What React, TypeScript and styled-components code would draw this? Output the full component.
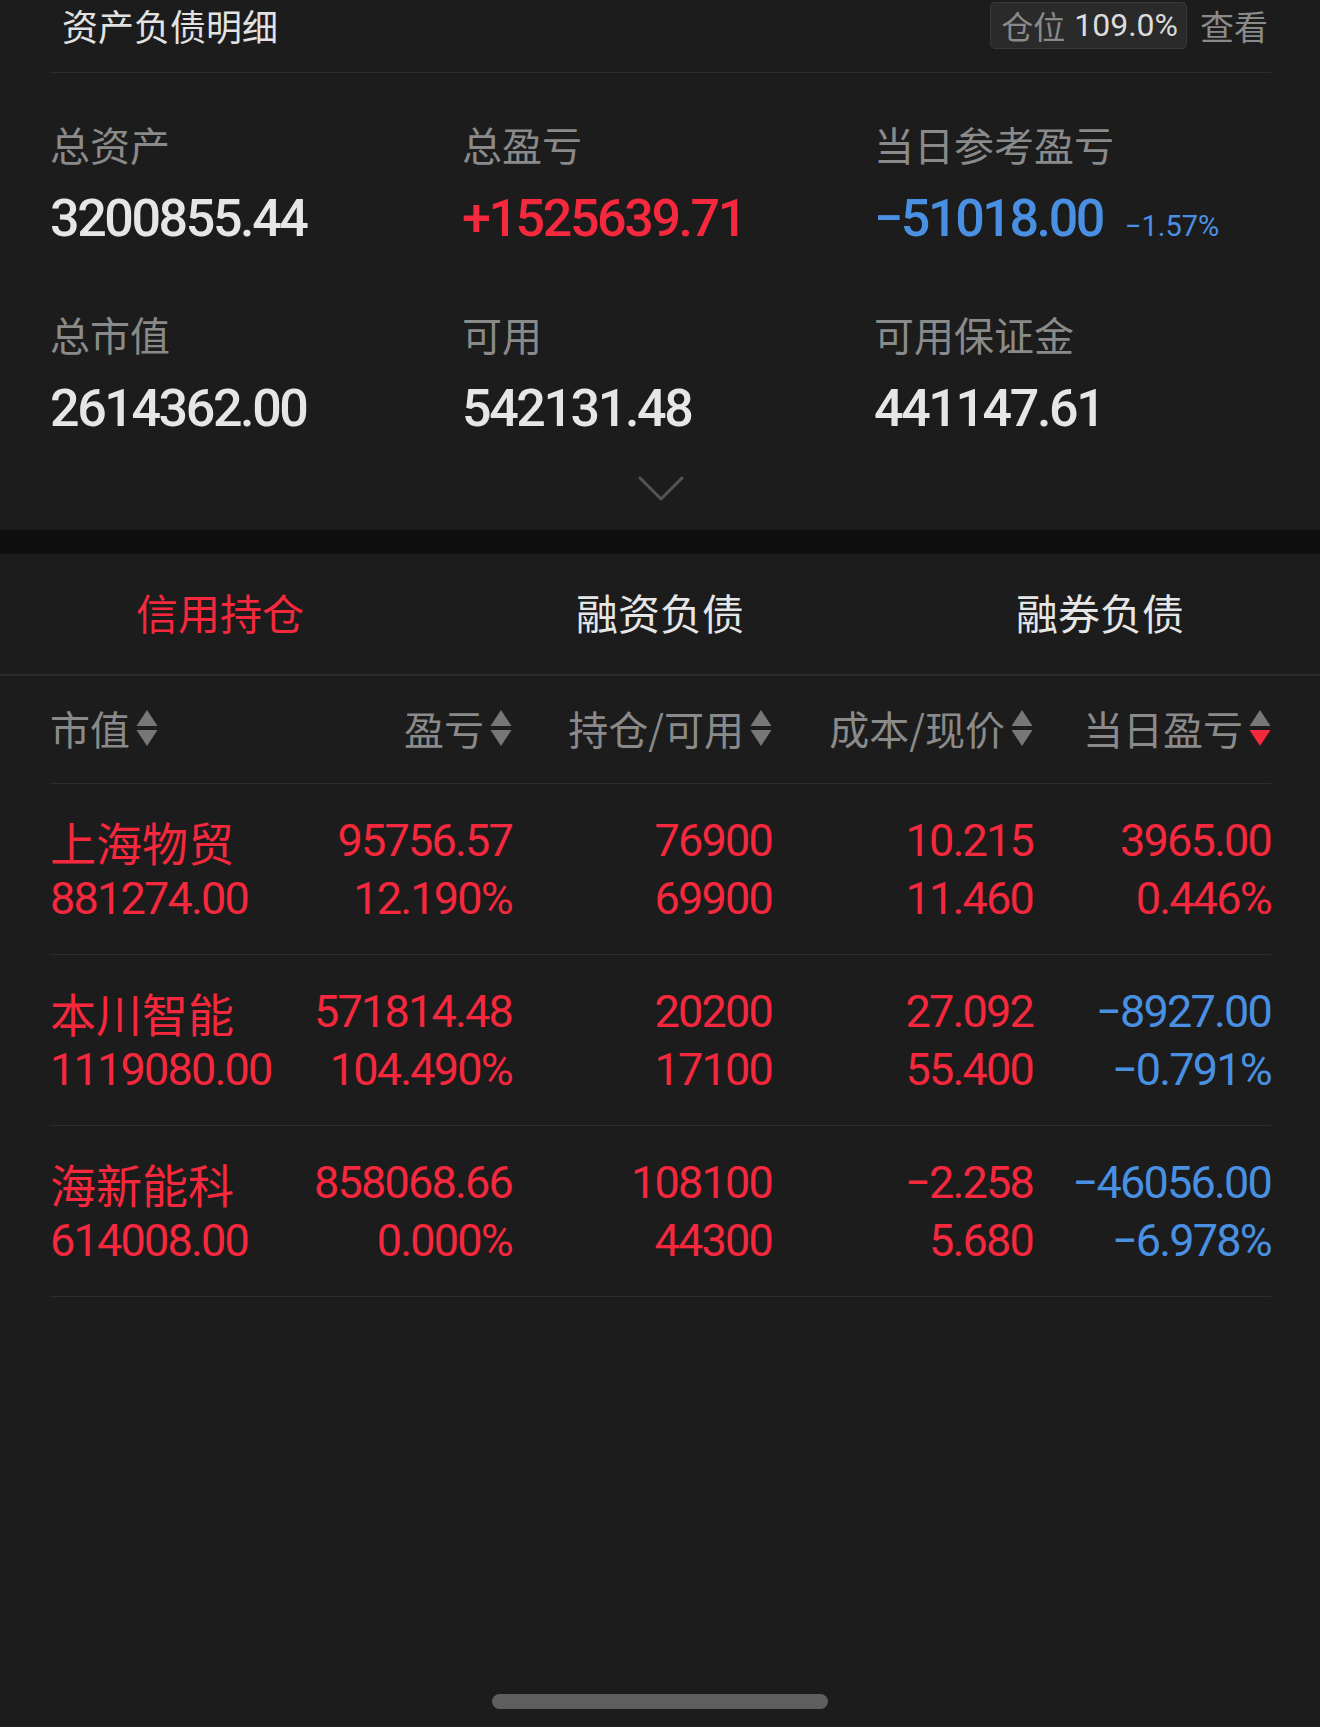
import React from "react";
import styled, { createGlobalStyle } from "styled-components";

const RED = "#f5283d";
const BLUE = "#4a90e2";
const GRAY = "#8a8a8a";
const WHITE = "#e6e6e6";
const LINE = "#2c2c2c";
const CJK = `"Noto Sans CJK SC", "Noto Sans", sans-serif`;
const NUM = `Roboto, "Noto Sans CJK SC", sans-serif`;

const GlobalStyle = createGlobalStyle`
  html, body {
    margin: 0;
    padding: 0;
    background: #1c1c1c;
  }
  body {
    font-family: ${NUM};
    -webkit-font-smoothing: antialiased;
  }
  * { box-sizing: border-box; }
`;

const Page = styled.div`
  min-height: 100vh;
  display: flex;
  flex-direction: column;
  background: #1c1c1c;
`;

const Summary = styled.section`
  padding: 0 49px 0 50px;
`;

const TopBar = styled.div`
  display: flex;
  align-items: center;
  justify-content: space-between;
  height: 73px;
  padding-bottom: 22px;
  border-bottom: 1px solid ${LINE};
`;

const Title = styled.div`
  margin-left: 12px;
  font-family: ${CJK};
  font-size: 36px;
  line-height: 50px;
  color: #e2e2e2;
`;

const TopActions = styled.div`
  display: flex;
  align-items: center;
  gap: 13px;
`;

const Badge = styled.div`
  display: flex;
  align-items: center;
  gap: 9px;
  height: 47px;
  padding: 0 8px 0 10px;
  background: #2a2a2a;
  border: 1px solid #383838;
  border-radius: 5px;
  font-size: 32px;
`;

const BadgeLabel = styled.span`
  font-family: ${CJK};
  color: ${GRAY};
`;

const BadgeValue = styled.span`
  color: #dcdcdc;
`;

const LinkText = styled.span`
  margin-right: 3px;
  font-family: ${CJK};
  font-size: 34px;
  color: ${GRAY};
`;

const StatsGrid = styled.div`
  display: grid;
  grid-template-columns: 412px 412px 1fr;
  row-gap: 60px;
  padding-top: 47px;
`;

const Stat = styled.div`
  display: flex;
  flex-direction: column;
`;

const StatLabel = styled.div`
  height: 48px;
  font-family: ${CJK};
  font-size: 40px;
  line-height: 48px;
  color: ${GRAY};
`;

const StatValue = styled.div<{ $color: string }>`
  height: 62px;
  margin-top: 20px;
  font-size: 52px;
  line-height: 62px;
  font-weight: 500;
  letter-spacing: -2.4px;
  white-space: nowrap;
  color: ${(p) => p.$color};
`;

const StatSub = styled.span`
  margin-left: 22px;
  font-size: 29px;
  font-weight: 400;
  letter-spacing: 0;
`;

const Expand = styled.div`
  display: flex;
  justify-content: center;
  margin-top: 36px;
  padding-bottom: 28px;
`;

const Band = styled.div`
  height: 24px;
  background: #0f0f0f;
`;

const Tabs = styled.nav`
  display: grid;
  grid-template-columns: repeat(3, 1fr);
  height: 122px;
  border-bottom: 2px solid ${LINE};
`;

const Tab = styled.div<{ $active?: boolean }>`
  display: flex;
  align-items: center;
  justify-content: center;
  padding-bottom: 4px;
  font-family: ${CJK};
  font-size: 42px;
  line-height: 50px;
  color: ${(p) => (p.$active ? RED : WHITE)};
`;

const Table = styled.section`
  padding: 0 49px 0 50px;
`;

const Row = styled.div`
  display: grid;
  grid-template-columns: 1fr 180px 260px 261px 238px;
  border-bottom: 1px solid ${LINE};
`;

const HeaderRow = styled(Row)`
  height: 108px;
  padding-bottom: 4px;
  align-items: center;
`;

const DataRow = styled(Row)`
  padding: 28px 0 26px;
`;

const HeadCell = styled.div<{ $align: "left" | "right" }>`
  display: flex;
  align-items: center;
  justify-content: ${(p) => (p.$align === "left" ? "flex-start" : "flex-end")};
  gap: 6px;
  font-family: ${CJK};
  font-size: 40px;
  line-height: 48px;
  color: ${GRAY};
  white-space: nowrap;
`;

const Cell = styled.div<{ $align: "left" | "right" }>`
  display: flex;
  flex-direction: column;
  align-items: ${(p) => (p.$align === "left" ? "flex-start" : "flex-end")};
  white-space: nowrap;
`;

const Line = styled.div<{ $color: string; $cjk?: boolean }>`
  height: 58px;
  font-family: ${(p) => (p.$cjk ? CJK : NUM)};
  font-size: ${(p) => (p.$cjk ? "46px" : "45px")};
  line-height: 58px;
  letter-spacing: ${(p) => (p.$cjk ? "0" : "-1.8px")};
  color: ${(p) => p.$color};
`;

const Spacer = styled.div`
  flex: 1;
`;

const HomeBar = styled.div`
  align-self: center;
  width: 336px;
  height: 15px;
  margin-bottom: 18px;
  border-radius: 8px;
  background: #5e5e5e;
`;

const SortIcon = ({ active }: { active?: "down" | "up" }) => (
  <svg width="22" height="36" viewBox="0 0 22 36">
    <polygon points="11,0 21.5,16 0.5,16" fill={active === "up" ? RED : "#777"} />
    <polygon points="0.5,20 21.5,20 11,36" fill={active === "down" ? RED : "#777"} />
  </svg>
);

const Chevron = () => (
  <svg width="46" height="26" viewBox="0 0 46 26">
    <polyline
      points="2,2 23,23 44,2"
      fill="none"
      stroke="#555"
      strokeWidth="3"
      strokeLinecap="round"
      strokeLinejoin="miter"
    />
  </svg>
);

type Sign = "up" | "down";
const tone = (s: Sign) => (s === "up" ? RED : BLUE);

const holdings: {
  name: string;
  mv: string;
  pl: string;
  plPct: string;
  qty: string;
  avail: string;
  cost: string;
  price: string;
  day: string;
  dayPct: string;
  daySign: Sign;
}[] = [
  {
    name: "上海物贸",
    mv: "881274.00",
    pl: "95756.57",
    plPct: "12.190%",
    qty: "76900",
    avail: "69900",
    cost: "10.215",
    price: "11.460",
    day: "3965.00",
    dayPct: "0.446%",
    daySign: "up",
  },
  {
    name: "本川智能",
    mv: "1119080.00",
    pl: "571814.48",
    plPct: "104.490%",
    qty: "20200",
    avail: "17100",
    cost: "27.092",
    price: "55.400",
    day: "−8927.00",
    dayPct: "−0.791%",
    daySign: "down",
  },
  {
    name: "海新能科",
    mv: "614008.00",
    pl: "858068.66",
    plPct: "0.000%",
    qty: "108100",
    avail: "44300",
    cost: "−2.258",
    price: "5.680",
    day: "−46056.00",
    dayPct: "−6.978%",
    daySign: "down",
  },
];

const stats = [
  { label: "总资产", value: "3200855.44", color: WHITE },
  { label: "总盈亏", value: "+1525639.71", color: RED },
  { label: "当日参考盈亏", value: "−51018.00", color: BLUE, sub: "−1.57%" },
  { label: "总市值", value: "2614362.00", color: WHITE },
  { label: "可用", value: "542131.48", color: WHITE },
  { label: "可用保证金", value: "441147.61", color: WHITE },
];

const headers: { label: string; align: "left" | "right"; active?: "down" }[] = [
  { label: "市值", align: "left" },
  { label: "盈亏", align: "right" },
  { label: "持仓/可用", align: "right" },
  { label: "成本/现价", align: "right" },
  { label: "当日盈亏", align: "right", active: "down" },
];

export default function App() {
  return (
    <Page>
      <GlobalStyle />
      <Summary>
        <TopBar>
          <Title>资产负债明细</Title>
          <TopActions>
            <Badge>
              <BadgeLabel>仓位</BadgeLabel>
              <BadgeValue>109.0%</BadgeValue>
            </Badge>
            <LinkText>查看</LinkText>
          </TopActions>
        </TopBar>
        <StatsGrid>
          {stats.map((s) => (
            <Stat key={s.label}>
              <StatLabel>{s.label}</StatLabel>
              <StatValue $color={s.color}>
                {s.value}
                {s.sub && <StatSub>{s.sub}</StatSub>}
              </StatValue>
            </Stat>
          ))}
        </StatsGrid>
        <Expand>
          <Chevron />
        </Expand>
      </Summary>
      <Band />
      <Tabs>
        <Tab $active>信用持仓</Tab>
        <Tab>融资负债</Tab>
        <Tab>融券负债</Tab>
      </Tabs>
      <Table>
        <HeaderRow>
          {headers.map((h) => (
            <HeadCell key={h.label} $align={h.align}>
              {h.label}
              <SortIcon active={h.active} />
            </HeadCell>
          ))}
        </HeaderRow>
        {holdings.map((r) => (
          <DataRow key={r.name}>
            <Cell $align="left">
              <Line $color={RED} $cjk>
                {r.name}
              </Line>
              <Line $color={RED}>{r.mv}</Line>
            </Cell>
            <Cell $align="right">
              <Line $color={RED}>{r.pl}</Line>
              <Line $color={RED}>{r.plPct}</Line>
            </Cell>
            <Cell $align="right">
              <Line $color={RED}>{r.qty}</Line>
              <Line $color={RED}>{r.avail}</Line>
            </Cell>
            <Cell $align="right">
              <Line $color={RED}>{r.cost}</Line>
              <Line $color={RED}>{r.price}</Line>
            </Cell>
            <Cell $align="right">
              <Line $color={tone(r.daySign)}>{r.day}</Line>
              <Line $color={tone(r.daySign)}>{r.dayPct}</Line>
            </Cell>
          </DataRow>
        ))}
      </Table>
      <Spacer />
      <HomeBar />
    </Page>
  );
}
